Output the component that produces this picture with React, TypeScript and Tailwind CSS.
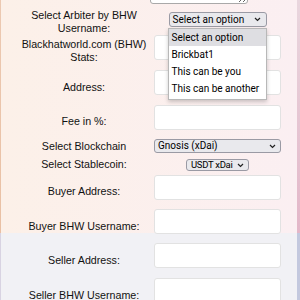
import React from "react";

function Chevron() {
  return (
    <svg width="7" height="5" viewBox="0 0 7 5" className="shrink-0">
      <path d="M1 1 L3.5 3.5 L6 1" fill="none" stroke="#222" strokeWidth="1.2" />
    </svg>
  );
}

function Input() {
  return <div className="w-[127px] h-[25px] shrink-0 bg-white border border-[#e2e2e2] rounded-[3px]" />;
}

const labelCls =
  "w-[128px] shrink-0 text-center text-[10.7px] leading-[13px] text-[#111] font-['Liberation_Sans',Arial,sans-serif]";

export default function App() {
  return (
    <div className="flex h-[300px] w-[300px] overflow-hidden">
      <div className="w-[1px] shrink-0 bg-[linear-gradient(to_bottom,#ecc9b2_0px,#e9c0a4_233px,#d8d3e2_233px)]" />
      <div className="w-[296px] shrink-0 pl-[19px] bg-[image:linear-gradient(to_bottom,transparent_233px,#f1f1f5_233px),linear-gradient(to_right,#fcf0e8,#fbeff2)]">
        {/* textarea bottom */}
        <div className="flex items-end h-[4px] overflow-hidden">
          <textarea
            readOnly
            className="ml-[130px] w-[98px] h-[40px] shrink-0 bg-white border border-[#a9a9a9] rounded-[3px] resize"
          />
        </div>

        {/* Row A: arbiter */}
        <div className="flex items-center gap-[6px] h-[15px] mt-[8px]">
          <div className={labelCls + " pt-[4px]"}>Select Arbiter by BHW Username:</div>
          <div className="w-[127px] shrink-0 flex justify-center">
            <div className="relative">
              <div className="w-[98px] h-[15px] flex items-center justify-between pl-[3px] pr-[5px] bg-[#e9e9ed] border border-[#9a9aa4] rounded-[3px] text-[10px] leading-[12px] text-black font-['Roboto',sans-serif]">
                <span>Select an option</span>
                <Chevron />
              </div>
              <div className="absolute left-[-1px] top-[16px] w-[99px] z-10 bg-white border border-[#b8b8b8] shadow-[0_2px_4px_rgba(0,0,0,0.2)] pb-[2px] text-[10px] text-black font-['Roboto',sans-serif]">
                <div className="h-[17px] flex items-center px-[3px] bg-[#dedee2]">Select an option</div>
                <div className="h-[17px] flex items-center px-[3px]">Brickbat1</div>
                <div className="h-[17px] flex items-center px-[3px]">This can be you</div>
                <div className="h-[17px] flex items-center px-[3px]">This can be another</div>
              </div>
            </div>
          </div>
        </div>

        {/* Row B */}
        <div className="flex items-center gap-[6px] h-[25px] mt-[8px]">
          <div className={labelCls + " pt-[7px]"}>Blackhatworld.com (BHW) Stats:</div>
          <Input />
        </div>

        {/* Row C */}
        <div className="flex items-center gap-[6px] h-[25px] mt-[10px]">
          <div className={labelCls + " pt-[9px]"}>Address:</div>
          <Input />
        </div>

        {/* Row D */}
        <div className="flex items-center gap-[6px] h-[25px] mt-[10px]">
          <div className={labelCls + " pt-[8px]"}>Fee in %:</div>
          <Input />
        </div>

        {/* Row E */}
        <div className="flex items-center gap-[6px] h-[14px] mt-[9px]">
          <div className={labelCls}>Select Blockchain</div>
          <div className="w-[127px] h-[14px] shrink-0 flex items-center justify-between pl-[3px] pr-[4px] bg-[#e9e9ed] border border-[#9a9aa4] rounded-[3px] text-[10px] leading-[12px] text-black font-['Roboto',sans-serif]">
            <span>Gnosis (xDai)</span>
            <Chevron />
          </div>
        </div>

        {/* Row F */}
        <div className="flex items-center gap-[6px] h-[12px] mt-[6px]">
          <div className={labelCls + " pb-[2px]"}>Select Stablecoin:</div>
          <div className="w-[127px] shrink-0 flex justify-center">
            <div className="w-[63px] h-[12px] flex items-center justify-between pl-[4px] pr-[4px] bg-[#e9e9ed] border border-[#9a9aa4] rounded-[3px] text-[9.5px] leading-[10px] tracking-[-0.3px] text-black font-['Roboto',sans-serif]">
              <span className="whitespace-nowrap">USDT xDai</span>
              <Chevron />
            </div>
          </div>
        </div>

        {/* Row G */}
        <div className="flex items-center gap-[6px] h-[25px] mt-[4px]">
          <div className={labelCls + " pt-[8px]"}>Buyer Address:</div>
          <Input />
        </div>

        {/* Row H */}
        <div className="flex items-center gap-[6px] h-[25px] mt-[9px]">
          <div className={labelCls + " pt-[9px]"}>Buyer BHW Username:</div>
          <Input />
        </div>

        {/* Row I */}
        <div className="flex items-center gap-[6px] h-[25px] mt-[9px]">
          <div className={labelCls + " pt-[10px]"}>Seller Address:</div>
          <Input />
        </div>

        {/* Row J */}
        <div className="flex items-center gap-[6px] h-[25px] mt-[10px]">
          <div className={labelCls + " pt-[9px]"}>Seller BHW Username:</div>
          <Input />
        </div>
      </div>
      <div className="w-[3px] shrink-0 bg-[linear-gradient(to_bottom,#e9d6de_0px,#e3b6c8_233px,#c3c8de_233px)]" />
    </div>
  );
}
